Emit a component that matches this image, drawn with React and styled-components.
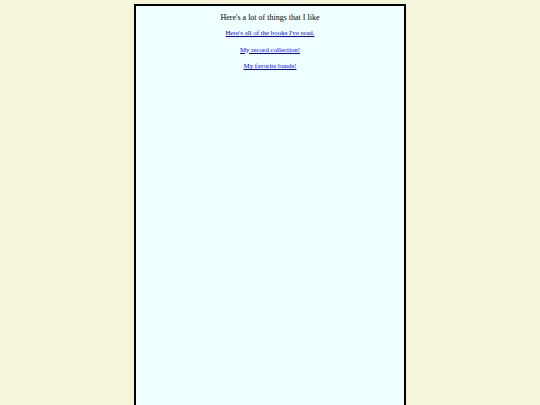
import React from "react";
import styled, { createGlobalStyle } from "styled-components";

const Global = createGlobalStyle`
  html, body { margin: 0; padding: 0; background: #f5f5dc; height: 100%; overflow: hidden; }
  body { font-family: "Liberation Serif", "Times New Roman", serif; }
  #root { height: 100%; }
`;

const Page = styled.div`
  height: 100vh;
  overflow: hidden;
  padding-top: 4px;
  box-sizing: border-box;
`;

const Panel = styled.main`
  width: 268px;
  height: calc(100vh + 10px);
  margin: 0 auto;
  background: #f0ffff;
  border: 2px solid #000;
  display: flex;
  flex-direction: column;
  align-items: center;
  padding-top: 7px;
`;

const Title = styled.h1`
  margin: 0 0 6px;
  font-size: 8px;
  line-height: 10px;
  font-weight: normal;
  color: #000;
`;

const LinkRow = styled.p`
  margin: 0 0 8.5px;
  font-size: 6.9px;
  line-height: 8px;
`;

const Link = styled.a`
  color: #0000ee;
  text-decoration: underline;
`;

export default function App() {
  return (
    <>
      <Global />
      <Page>
        <Panel>
          <Title>Here's a lot of things that I like</Title>
          <LinkRow><Link href="#">Here's all of the books I've read.</Link></LinkRow>
          <LinkRow><Link href="#">My record collection!</Link></LinkRow>
          <LinkRow><Link href="#">My favorite bands!</Link></LinkRow>
        </Panel>
      </Page>
    </>
  );
}
